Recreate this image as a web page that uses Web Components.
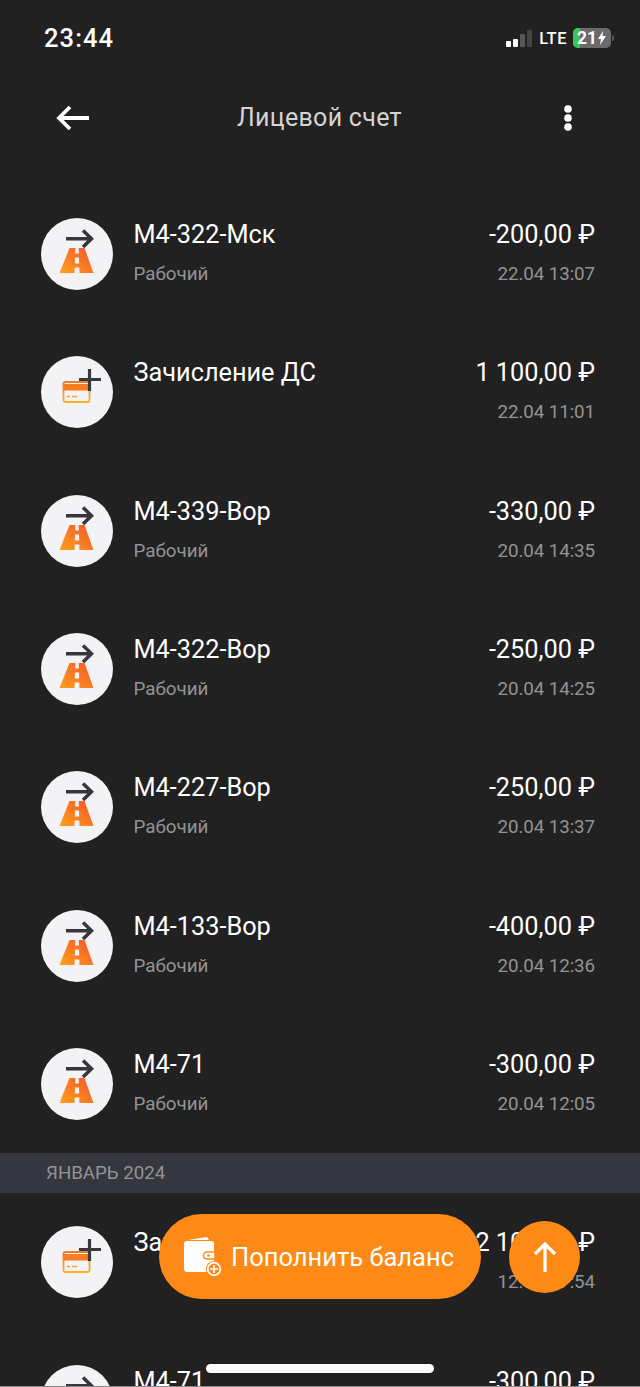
<!DOCTYPE html>
<html><head><meta charset="utf-8">
<style>
html,body{margin:0;padding:0;background:#212121}
body{width:640px;height:1387px;overflow:hidden;font-family:Roboto,"Liberation Sans",sans-serif;position:relative}
</style></head><body>
<account-screen></account-screen>
<template id="road"><svg width="72" height="72" viewBox="0 0 72 72"><defs><linearGradient id="g1" x1="0" y1="1" x2="1" y2="0"><stop offset="0" stop-color="#ffa01d"/><stop offset="1" stop-color="#f2552b"/></linearGradient></defs>
<path d="M28.500 30h15L52.500 55h-34z" fill="url(#g1)"/>
<path d="M34.300 30h3.400l.2 5.500h-3.800zM34 39.500h4l.2 6h-4.400zM33.700 49.500h4.600l.2 5.500h-5z" fill="#f3f3f5"/>
<path d="M25 20.800h25.500M42 12.500l8.500 8.300L42 29" fill="none" stroke="#35363e" stroke-width="3.500"/></svg></template>
<template id="card"><svg width="72" height="72" viewBox="0 0 72 72"><defs><linearGradient id="g2" x1="0" y1="0" x2="0" y2="1"><stop offset="0" stop-color="#f47a22"/><stop offset="1" stop-color="#fdb02c"/></linearGradient></defs>
<rect x="22.500" y="26" width="26" height="20" rx="2" fill="none" stroke="url(#g2)" stroke-width="1.800"/>
<rect x="22.500" y="28" width="26" height="6.500" fill="#f57d22"/>
<path d="M26 40.500h3M31 40.500h5" stroke="#f9a035" stroke-width="1.500"/>
<path d="M38 23.500h22M48.500 13v22" stroke="#363842" stroke-width="3.200" fill="none"/></svg></template>
<script>
const make=(name,html,setup)=>customElements.define(name,class extends HTMLElement{
  constructor(){super();this.attachShadow({mode:'open'}).innerHTML=html}
  connectedCallback(){setup&&setup(this)}
});
make('status-bar',`<style>
:host{display:flex;height:76px;box-sizing:border-box;padding:0 26px 0 44px;align-items:center;justify-content:space-between;color:#fff}
.t{font:500 25.500px Roboto,sans-serif;letter-spacing:1.100px}
.r{display:flex;align-items:center;gap:6px}
.s{display:flex;align-items:flex-end;gap:2px;height:17px;margin-right:1px}
.s i{display:block;width:5px;border-radius:1px;background:#fff}
.l{font:500 16.500px Roboto,sans-serif;letter-spacing:.5px}
.b{position:relative;display:flex;align-items:center;width:38px;height:20px;border-radius:5px;background:#6a6a6a;overflow:hidden;font:700 17.500px Roboto,sans-serif;padding-left:4px;box-sizing:border-box;gap:1px}
.b u{position:absolute;left:0;top:0;bottom:0;width:7px;background:#35c759}
.b span,.b svg{position:relative}
.n{width:2px;height:6px;background:#555;border-radius:0 2px 2px 0;margin-left:-5px}
</style><span class="t">23:44</span><div class="r">
<div class="s"><i style="height:6px"></i><i style="height:8px"></i><i style="height:13px;background:#575757"></i><i style="height:17px;background:#444"></i></div>
<span class="l">LTE</span><div class="b"><u></u><span>21</span><svg width="8" height="14" viewBox="0 0 8 14"><path d="M5 0 0 8h3l-1 6 6-9H4.500z" fill="#fff"/></svg></div><div class="n"></div></div>`);
make('nav-bar',`<style>
:host{display:flex;justify-content:space-between;align-items:center;height:83px;box-sizing:border-box;padding:0 67px 0 56px;color:#cfcfcf}
.m{font:400 25px Roboto,sans-serif;letter-spacing:.3px;color:#d4d4d4;margin-left:-13px}
.e{display:flex}
svg{display:block}
</style><svg width="33" height="26" viewBox="0 0 33 26"><path d="M33 13H3M14 2 3 13l11 11" fill="none" stroke="#fff" stroke-width="3.800"/></svg><span class="m">Лицевой счет</span><div class="e"><svg width="10" height="26" viewBox="0 0 10 26"><circle cx="5" cy="4" r="3.800" fill="#fff"/><circle cx="5" cy="13" r="3.800" fill="#fff"/><circle cx="5" cy="22" r="3.800" fill="#fff"/></svg></div>`);
make('tx-row',`<style>
:host{display:grid;grid-template-columns:72px 1fr auto;column-gap:21px;height:138.330px;box-sizing:border-box;padding:0 45px 0 41px;align-items:center}
.c{width:72px;height:72px;border-radius:50%;background:#f3f3f5;overflow:hidden}
.c svg{display:block}
.col{display:flex;flex-direction:column;margin-top:-2px}
.a{font:400 25.300px/30px Roboto,sans-serif;color:#fff}
.b{font:400 18.800px/24px Roboto,sans-serif;color:#939393;margin-top:12px}
.t{margin-left:-.5px}
.x{text-align:right}
.x .b{letter-spacing:-.1px}
</style><div class="c" id="i"></div><div class="col t"><span class="a" id="t"></span><span class="b" id="s">&nbsp;</span></div><div class="col x"><span class="a" id="v"></span><span class="b" id="d"></span></div>`,
el=>{const r=el.shadowRoot,g=n=>el.getAttribute(n);
 r.getElementById('i').append(document.getElementById(g('icon')).content.cloneNode(true));
 r.getElementById('t').textContent=g('name');
 r.getElementById('s').textContent=g('sub')||'\u00a0';
 r.getElementById('v').textContent=g('amount');
 r.getElementById('d').textContent=g('date');});
make('month-head',`<style>
:host{display:flex;align-items:center;height:40px;background:#35363f;padding-left:46px;color:#939393;font:400 18.700px Roboto,sans-serif}
</style><slot></slot>`);
make('tx-list',`<style>:host{display:block;margin-top:26px}</style><slot></slot>`);
make('top-up',`<style>
:host{display:flex;position:absolute;left:159px;top:1214px;width:322px;height:85px;border-radius:42.500px;background:#fd8a16;align-items:center;box-sizing:border-box;padding-left:24px;gap:9px;color:#fff;font:400 25.500px Roboto,sans-serif}
svg{display:block;flex:none}
</style><svg width="39" height="42" viewBox="0 0 39 42"><path d="M5 4 24 1l2 3z" fill="#fff"/><rect x="1" y="5" width="30" height="31" rx="3" fill="#fff"/><path d="M24 16h8v7h-8a3.500 3.500 0 0 1 0-7z" fill="#fff" stroke="#fd8a16" stroke-width="1.500"/><circle cx="25.500" cy="19.500" r="1.300" fill="#fd8a16"/><circle cx="31" cy="33" r="8" fill="#fd8a16"/><circle cx="31" cy="33" r="6.300" fill="none" stroke="#fff" stroke-width="1.700"/><path d="M27 33h8M31 29v8" stroke="#fff" stroke-width="1.700"/></svg><slot></slot>`);
make('up-fab',`<style>
:host{display:flex;position:absolute;left:509px;top:1221px;width:71px;height:72px;border-radius:50%;background:#fd8a16;align-items:center;justify-content:center}
</style><svg width="24" height="32" viewBox="0 0 24 32"><path d="M12 31V3M2 13 12 3l10 10" fill="none" stroke="#fff" stroke-width="3.300"/></svg>`);
make('home-bar',`<style>:host{display:block;position:absolute;left:206px;top:1364px;width:228px;height:9px;border-radius:5px;background:#fff}</style>`);
make('edge-line',`<style>:host{display:block;position:absolute;left:0;right:0;bottom:0;height:1px;background:#8a8a8a}</style>`);
make('account-screen',`<style>:host{display:block;height:1387px;overflow:hidden;position:relative;background:#212121}</style>
<status-bar></status-bar><nav-bar></nav-bar><tx-list>
<tx-row icon="road" name="М4-322-Мск" sub="Рабочий" amount="-200,00 ₽" date="22.04 13:07"></tx-row>
<tx-row icon="card" name="Зачисление ДС" amount="1 100,00 ₽" date="22.04 11:01"></tx-row>
<tx-row icon="road" name="М4-339-Вор" sub="Рабочий" amount="-330,00 ₽" date="20.04 14:35"></tx-row>
<tx-row icon="road" name="М4-322-Вор" sub="Рабочий" amount="-250,00 ₽" date="20.04 14:25"></tx-row>
<tx-row icon="road" name="М4-227-Вор" sub="Рабочий" amount="-250,00 ₽" date="20.04 13:37"></tx-row>
<tx-row icon="road" name="М4-133-Вор" sub="Рабочий" amount="-400,00 ₽" date="20.04 12:36"></tx-row>
<tx-row icon="road" name="М4-71" sub="Рабочий" amount="-300,00 ₽" date="20.04 12:05"></tx-row>
<month-head>ЯНВАРЬ 2024</month-head>
<tx-row icon="card" name="Зачисление ДС" amount="2 100,00 ₽" date="12.01 17:54"></tx-row>
<tx-row icon="road" name="М4-71" sub="Рабочий" amount="-300,00 ₽" date="12.01 12:05"></tx-row>
</tx-list>
<top-up>Пополнить баланс</top-up><up-fab></up-fab><home-bar></home-bar><edge-line></edge-line>`);
</script>
</body></html>
